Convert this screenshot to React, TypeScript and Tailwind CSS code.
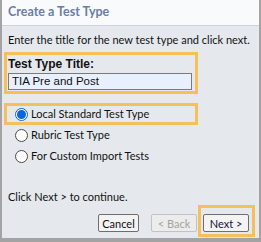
import { useState } from "react";

const options = [
  "Local Standard Test Type",
  "Rubric Test Type",
  "For Custom Import Tests",
];

function Radio({ checked }: { checked: boolean }) {
  return (
    <span
      className={
        checked
          ? "w-[13px] h-[13px] rounded-full border border-[#0a66d6] bg-white flex items-center justify-center shrink-0"
          : "w-[13px] h-[13px] rounded-full border border-[#4a4a4a] bg-white shrink-0"
      }
    >
      {checked ? <span className="w-[9px] h-[9px] rounded-full bg-[#0a66e0]" /> : null}
    </span>
  );
}

export default function App() {
  const [choice, setChoice] = useState(0);
  const [title, setTitle] = useState("TIA Pre and Post");

  return (
    <div className="w-[261px] h-[242px] flex flex-col border-l-2 border-r-2 border-b-[4px] border-[#a3a3a3] font-['Lato',sans-serif] text-[11px] text-[#111] overflow-hidden">
      <div className="h-[26px] shrink-0 bg-[#f9fafc] border-b border-[#cdd0e6] flex items-center px-[6px]">
        <span className="text-[12.5px] font-bold text-[#6b7ea6]">
          Create a Test Type
        </span>
      </div>

      <div className="flex-1 bg-[#e5e9ed] px-[2px] flex flex-col">
        <p className="mt-[6px] px-[4px] leading-[16px] whitespace-nowrap">
          Enter the title for the new test type and click next.
        </p>

        <div className="mt-[4px] w-[194px] border-[3px] border-[#f5c05b] px-[1px] pt-[2px] pb-[1px]">
          <label className="block font-['Liberation_Sans',sans-serif] font-bold text-[12px] leading-[15px]">
            Test Type Title:
          </label>
          <input
            value={title}
            onChange={(e) => setTitle(e.target.value)}
            className="block mt-[1px] w-[184px] h-[17px] border border-[#7a7a7a] bg-[#e8f0fe] px-[3px] font-['Liberation_Sans',sans-serif] text-[11.5px] outline-none"
          />
        </div>

        <div className="mt-[9px] flex flex-col">
          {options.map((o, i) => (
            <div
              key={o}
              onClick={() => setChoice(i)}
              className={
                i === 0
                  ? "w-[194px] h-[22px] border-[3px] border-[#f5c05b] flex items-center gap-[3px] pl-[8px] cursor-pointer"
                  : "h-[21px] flex items-center gap-[3px] pl-[11px] cursor-pointer"
              }
            >
              <Radio checked={choice === i} />
              <span>{o}</span>
            </div>
          ))}
        </div>

        <p className="mt-[22px] px-[4px] leading-[16px]">
          Click Next &gt; to continue.
        </p>

        <div className="mt-auto mb-[1px] mr-[2px] flex items-end justify-end">
          <button className="mb-[5px] w-[41px] h-[18px] border border-[#6e6e6e] rounded-[2px] bg-[#f3f3f3] text-[11px] leading-none">
            Cancel
          </button>
          <button
            disabled
            className="mb-[5px] ml-[12px] w-[46px] h-[18px] border border-[#c2c2c2] rounded-[2px] bg-[#ececec] text-[#a3a3a3] text-[11px] leading-none"
          >
            &lt; Back
          </button>
          <div className="ml-[1px] border-[3px] border-[#f5c05b] pl-[2px] pr-[3px] pt-[6px] pb-[2px]">
            <button className="block w-[46px] h-[18px] border border-[#6e6e6e] rounded-[2px] bg-[#f3f3f3] text-[#14143c] text-[11px] leading-none">
              Next &gt;
            </button>
          </div>
        </div>
      </div>
    </div>
  );
}
